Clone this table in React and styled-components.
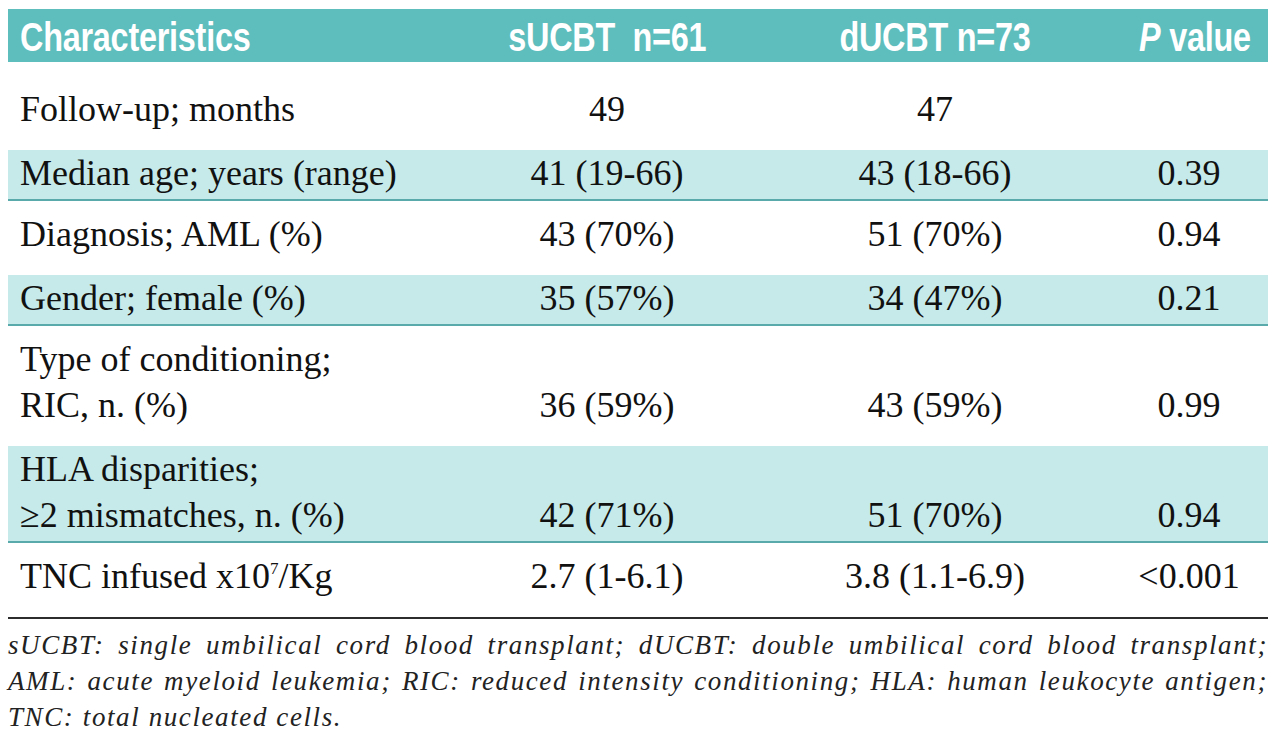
import React from "react";
import styled, { createGlobalStyle } from "styled-components";

const serif = `"Liberation Serif", "Times New Roman", "DejaVu Serif", serif`;

const GlobalStyle = createGlobalStyle`
  html, body { margin: 0; padding: 0; background: #ffffff; }
  body { font-family: ${serif}; color: #111; }
`;

const Page = styled.div`
  width: 1260px;
  padding: 9px 12px 0 8px;
  font-family: ${serif};
`;

const Table = styled.div`
  display: flex;
  flex-direction: column;
`;

const HeaderRow = styled.div`
  display: grid;
  grid-template-columns: 450px 274px 382px 126px;
  align-items: center;
  height: 53px;
  padding: 0 16px 0 12px;
  background: #5ebdbd;
  margin-bottom: 14px;
`;

const HeadCell = styled.div`
  text-align: ${(p) => (p.$align === "left" ? "left" : "center")};
  line-height: 53px;
  padding-top: 2px;
`;

const HeadText = styled.span`
  display: inline-block;
  font-family: "Liberation Sans", Arial, sans-serif;
  font-weight: 700;
  font-size: 40px;
  letter-spacing: -0.3px;
  color: #ffffff;
  white-space: pre;
  transform: scaleX(0.81);
  transform-origin: ${(p) => (p.$align === "left" ? "left center" : "center center")};
`;

const Row = styled.div`
  display: grid;
  grid-template-columns: 450px 274px 382px 126px;
  align-items: end;
  padding: ${(p) => (p.$shaded ? "0 16px 3px 12px" : "10px 16px 18px 12px")};
  background: ${(p) => (p.$shaded ? "#c6eaea" : "transparent")};
  border-bottom: ${(p) =>
    p.$shaded ? "2px solid #58aaab" : p.$last ? "2px solid #2c2c2c" : "0"};
`;

const Cell = styled.div`
  font-family: ${serif};
  font-size: 36px;
  line-height: 46px;
  color: #111;
  text-align: ${(p) => (p.$align === "left" ? "left" : "center")};
  white-space: nowrap;
`;

const Sup = styled.sup`
  font-size: 17px;
  line-height: 0;
  vertical-align: 14px;
`;

const Note = styled.div`
  margin-top: 8px;
  font-family: ${serif};
  font-style: italic;
  font-size: 27px;
  letter-spacing: 1.6px;
  line-height: 36px;
  color: #222;
`;

const NoteLine = styled.div`
  text-align: ${(p) => (p.$justify ? "justify" : "left")};
  text-align-last: ${(p) => (p.$justify ? "justify" : "left")};
  white-space: nowrap;
`;

const rows = [
  { label: ["Follow-up; months"], s: "49", d: "47", p: "" },
  { label: ["Median age; years (range)"], s: "41 (19-66)", d: "43 (18-66)", p: "0.39", shaded: true },
  { label: ["Diagnosis; AML (%)"], s: "43 (70%)", d: "51 (70%)", p: "0.94" },
  { label: ["Gender; female (%)"], s: "35 (57%)", d: "34 (47%)", p: "0.21", shaded: true },
  { label: ["Type of conditioning;", "RIC, n. (%)"], s: "36 (59%)", d: "43 (59%)", p: "0.99" },
  { label: ["HLA disparities;", "\u22652 mismatches, n. (%)"], s: "42 (71%)", d: "51 (70%)", p: "0.94", shaded: true },
  { label: null, s: "2.7 (1-6.1)", d: "3.8 (1.1-6.9)", p: "<0.001", last: true },
];

export default function App() {
  return (
    <>
      <GlobalStyle />
      <Page>
        <Table>
          <HeaderRow>
            <HeadCell $align="left">
              <HeadText $align="left">Characteristics</HeadText>
            </HeadCell>
            <HeadCell>
              <HeadText>{"sUCBT  n=61"}</HeadText>
            </HeadCell>
            <HeadCell>
              <HeadText>{"dUCBT n=73"}</HeadText>
            </HeadCell>
            <HeadCell>
              <HeadText>
                <i>P</i> value
              </HeadText>
            </HeadCell>
          </HeaderRow>
          {rows.map((r, i) => (
            <Row key={i} $shaded={r.shaded} $last={r.last}>
              <Cell $align="left">
                {r.label ? (
                  r.label.map((l, j) => <div key={j}>{l}</div>)
                ) : (
                  <div>
                    TNC infused x10<Sup>7</Sup>/Kg
                  </div>
                )}
              </Cell>
              <Cell>{r.s}</Cell>
              <Cell>{r.d}</Cell>
              <Cell>{r.p}</Cell>
            </Row>
          ))}
        </Table>
        <Note>
          <NoteLine $justify>
            sUCBT: single umbilical cord blood transplant; dUCBT: double umbilical cord blood transplant;
          </NoteLine>
          <NoteLine $justify>
            AML: acute myeloid leukemia; RIC: reduced intensity conditioning; HLA: human leukocyte antigen;
          </NoteLine>
          <NoteLine>TNC: total nucleated cells.</NoteLine>
        </Note>
      </Page>
    </>
  );
}
